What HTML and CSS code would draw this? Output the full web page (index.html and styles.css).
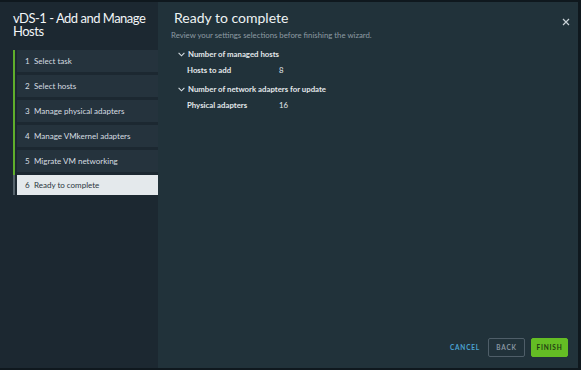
FILE: index.html
```html
<!DOCTYPE html>
<html lang="en">
<head>
  <meta charset="UTF-8">
  <meta name="viewport" content="width=device-width, initial-scale=1.0">
  <title>vDS-1 - Add and Manage Hosts</title>
  <link rel="stylesheet" href="styles.css">
</head>
<body>
  <div class="wizard">
    <aside class="sidebar">
      <h1 class="wizard-title">vDS-1 - Add and Manage Hosts</h1>
      <ol class="steps">
        <li class="step done"><div class="step-box"><span class="num">1</span>Select task</div></li>
        <li class="step done"><div class="step-box"><span class="num">2</span>Select hosts</div></li>
        <li class="step done"><div class="step-box"><span class="num">3</span>Manage physical adapters</div></li>
        <li class="step done"><div class="step-box"><span class="num">4</span>Manage VMkernel adapters</div></li>
        <li class="step done"><div class="step-box"><span class="num">5</span>Migrate VM networking</div></li>
        <li class="step current"><div class="step-box"><span class="num">6</span>Ready to complete</div></li>
      </ol>
    </aside>

    <main class="content">
      <div class="content-head">
        <h2 class="page-title">Ready to complete</h2>
        <button class="close" aria-label="Close">
          <svg width="8" height="8" viewBox="0 0 8 8"><path d="M1 1L7 7M7 1L1 7" stroke="#c9d1d6" stroke-width="1.2" fill="none"/></svg>
        </button>
      </div>
      <p class="intro">Review your settings selections before finishing the wizard.</p>

      <div class="summary">
        <div class="group">
          <div class="group-head">
            <svg class="chev" width="7" height="5" viewBox="0 0 7 5"><path d="M0.6 0.8L3.5 3.8L6.4 0.8" stroke="#d5dde2" stroke-width="1.1" fill="none"/></svg>
            Number of managed hosts
          </div>
          <div class="row"><span class="label">Hosts to add</span><span class="value">8</span></div>
        </div>
        <div class="group">
          <div class="group-head">
            <svg class="chev" width="7" height="5" viewBox="0 0 7 5"><path d="M0.6 0.8L3.5 3.8L6.4 0.8" stroke="#d5dde2" stroke-width="1.1" fill="none"/></svg>
            Number of network adapters for update
          </div>
          <div class="row"><span class="label">Physical adapters</span><span class="value">16</span></div>
        </div>
      </div>

      <div class="footer">
        <button class="btn btn-link">CANCEL</button>
        <button class="btn btn-outline">BACK</button>
        <button class="btn btn-primary">FINISH</button>
      </div>
    </main>
  </div>
</body>
</html>
```

FILE: styles.css
```css
html, body {
  margin: 0;
  height: 100%;
}

body {
  background-color: #0f181e;
  font-family: Lato, "Open Sans", sans-serif;
  padding: 2px 3px 2px 0;
  box-sizing: border-box;
}

.wizard {
  display: flex;
  height: 100%;
}

.sidebar {
  width: 158px;
  flex-shrink: 0;
  background-color: #1c2831;
  padding-top: 10px;
  box-sizing: border-box;
}

.wizard-title {
  margin: 0 0 12px 13px;
  font-size: 13px;
  font-weight: 400;
  line-height: 13px;
  letter-spacing: -0.5px;
  color: #f2f5f7;
}

.steps {
  list-style: none;
  margin: 0 0 0 13px;
  padding: 0;
}

.step {
  padding-left: 2px;
  padding-bottom: 3px;
  border-left: 2px solid #5fae2c;
}

.step.current {
  border-left-color: #55626b;
  padding-bottom: 0;
}

.step-box {
  height: 22px;
  display: flex;
  align-items: center;
  padding-left: 8px;
  background-color: #25333d;
  color: #d6dde1;
  font-size: 8px;
}

.step.current .step-box {
  background-color: #e4e9ec;
  color: #2a3640;
  height: 20px;
}

.num {
  width: 9px;
}

.content {
  flex: 1;
  background-color: #21323a;
  padding: 8px 10px 11px 13px;
  display: flex;
  flex-direction: column;
}

.content-head {
  display: flex;
  justify-content: space-between;
  align-items: flex-start;
}

.page-title {
  margin: 0 0 0 3px;
  font-size: 14px;
  font-weight: 400;
  line-height: 16px;
  color: #eef2f4;
}

.close {
  background: none;
  border: none;
  padding: 0;
  margin: 8px -2px 0 0;
  line-height: 0;
}

.intro {
  margin: 4px 0 0 0;
  font-size: 7.8px;
  color: #8e9ba3;
}

.summary {
  margin: 9px 0 0 7px;
}

.group {
  margin-bottom: 9px;
}

.group-head {
  display: flex;
  align-items: center;
  font-size: 7.8px;
  font-weight: 700;
  color: #e3e8eb;
}

.chev {
  margin-right: 3px;
}

.row {
  display: flex;
  margin: 6px 0 0 9px;
  font-size: 7.8px;
  font-weight: 700;
  color: #e3e8eb;
}

.label {
  width: 92px;
}

.value {
  font-weight: 400;
}

.footer {
  margin-top: auto;
  display: flex;
  justify-content: flex-end;
  align-items: center;
  gap: 6px;
}

.btn {
  height: 19px;
  box-sizing: border-box;
  font-family: Lato, sans-serif;
  font-size: 6.5px;
  font-weight: 700;
  letter-spacing: 0.8px;
  border-radius: 2px;
  padding: 0 9px;
  cursor: pointer;
}

.btn-link {
  background: none;
  border: none;
  color: #4ba3d3;
  padding: 0;
  margin-right: 2px;
}

.btn-outline {
  background: none;
  border: 1px solid #4f5e68;
  color: #8795a0;
  width: 37px;
  padding: 0;
}

.btn-primary {
  background-color: #64bd24;
  border: 1px solid #64bd24;
  color: #1f3a12;
  width: 37px;
  padding: 0;
}
```
